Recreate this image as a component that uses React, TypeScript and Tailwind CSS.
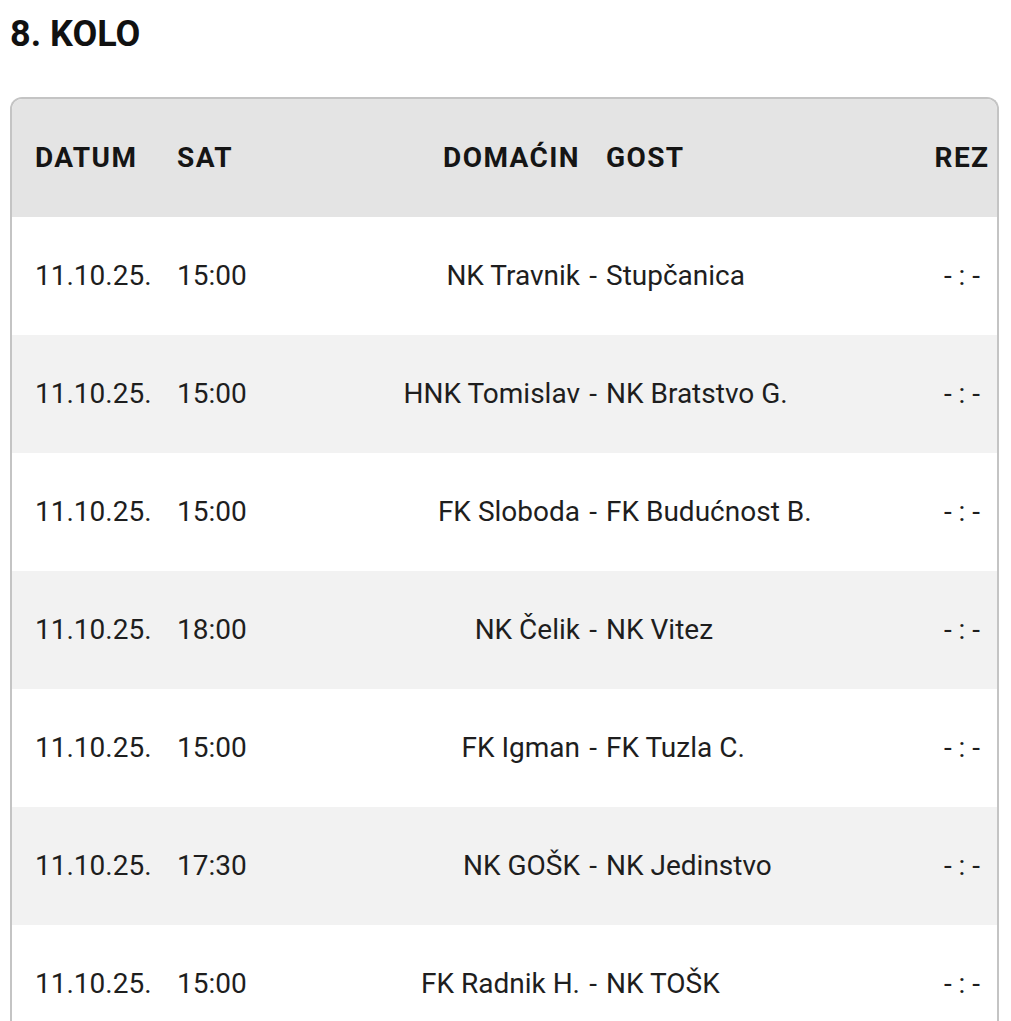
import React from "react";

const rows = [
  ["11.10.25.", "15:00", "NK Travnik", "Stupčanica"],
  ["11.10.25.", "15:00", "HNK Tomislav", "NK Bratstvo G."],
  ["11.10.25.", "15:00", "FK Sloboda", "FK Budućnost B."],
  ["11.10.25.", "18:00", "NK Čelik", "NK Vitez"],
  ["11.10.25.", "15:00", "FK Igman", "FK Tuzla C."],
  ["11.10.25.", "17:30", "NK GOŠK", "NK Jedinstvo"],
  ["11.10.25.", "15:00", "FK Radnik H.", "NK TOŠK"],
];

export default function App() {
  return (
    <div
      className="w-[1011px] h-[1021px] overflow-hidden bg-white text-[#1a1a1a]"
      style={{ fontFamily: "Roboto, 'Liberation Sans', sans-serif" }}
    >
      <h1 className="pl-[10px] pt-[13px] text-[36px] font-bold leading-[42px] text-[#111]">8. KOLO</h1>
      <div className="ml-[10px] mt-[42px] w-[989px] rounded-t-[12px] border-2 border-b-0 border-[#c4c4c4] overflow-hidden">
        <div className="flex h-[118px] items-center bg-[#e4e4e4] pl-[23px] text-[28px] font-bold tracking-[1.4px] text-[#151515]">
          <div className="w-[142px]">DATUM</div>
          <div className="w-[120px]">SAT</div>
          <div className="w-[283px] text-right">DOMAĆIN</div>
          <div className="w-[26px]" />
          <div className="flex-1">GOST</div>
          <div className="w-[70px] text-center">REZ</div>
        </div>
        {rows.map((r, i) => (
          <div
            key={i}
            className={`flex h-[118px] items-center pl-[23px] text-[28px] text-[#1e1e1e] ${
              i % 2 === 1 ? "bg-[#f2f2f2]" : "bg-white"
            }`}
          >
            <div className="w-[142px]">{r[0]}</div>
            <div className="w-[120px]">{r[1]}</div>
            <div className="w-[283px] text-right whitespace-nowrap">{r[2]}</div>
            <div className="w-[26px] text-center">-</div>
            <div className="flex-1 whitespace-nowrap">{r[3]}</div>
            <div className="w-[70px] text-center whitespace-pre">- : -</div>
          </div>
        ))}
      </div>
    </div>
  );
}
